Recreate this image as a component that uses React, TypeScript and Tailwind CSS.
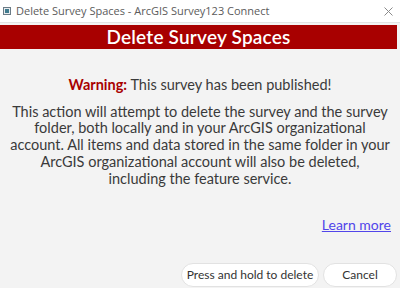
export default function App() {
  return (
    <div className="w-[400px] h-[288px] bg-[#f3f3f3] flex flex-col overflow-hidden font-['Lato',sans-serif]">
      <div className="h-[23px] bg-white flex items-center border-b border-[#e3e3e3] shrink-0">
        <svg className="ml-[3px] w-[8px] h-[8px]" viewBox="0 0 8 8">
          <rect x="0.5" y="0.5" width="7" height="7" fill="#e8ecef" stroke="#6b7b86" />
          <rect x="2" y="2" width="4" height="4" fill="#3f7b8e" />
        </svg>
        <span className="ml-[5px] text-[11px] text-[#5b5b5b] font-['Open_Sans',sans-serif]">
          Delete Survey Spaces - ArcGIS Survey123 Connect
        </span>
        <svg className="ml-auto mr-[7px] w-[9px] h-[9px]" viewBox="0 0 9 9">
          <path d="M0.5 0.5 L8.5 8.5 M8.5 0.5 L0.5 8.5" stroke="#8a8a8a" strokeWidth="1" />
        </svg>
      </div>
      <div className="mt-[2px] mr-[3px] h-[24px] bg-[#a80000] flex items-center justify-center shrink-0">
        <span className="text-white text-[19px] font-semibold tracking-[0.2px]">Delete Survey Spaces</span>
      </div>
      <div className="flex flex-col items-center px-2 pt-[28px] text-[#3a3a3a] text-[14.5px] leading-[16.7px] text-center">
        <p>
          <span className="text-[#a80000] font-bold">Warning:</span> This survey has been published!
        </p>
        <p className="mt-[10px]">
          This action will attempt to delete the survey and the survey
          <br />
          folder, both locally and in your ArcGIS organizational
          <br />
          account. All items and data stored in the same folder in your
          <br />
          ArcGIS organizational account will also be deleted,
          <br />
          including the feature service.
        </p>
      </div>
      <div className="flex justify-end pr-[9px] mt-[27px]">
        <a href="#" className="text-[#5145ea] underline text-[14px]">Learn more</a>
      </div>
      <div className="mt-auto flex justify-end gap-[4px] pr-[3px] pb-[1px]">
        <button className="h-[24px] w-[138px] rounded-full bg-white border border-[#e2e2e2] text-[12px] text-[#333] whitespace-nowrap">
          Press and hold to delete
        </button>
        <button className="h-[24px] w-[74px] rounded-full bg-white border border-[#e2e2e2] text-[12px] text-[#333] whitespace-nowrap">
          Cancel
        </button>
      </div>
    </div>
  );
}
